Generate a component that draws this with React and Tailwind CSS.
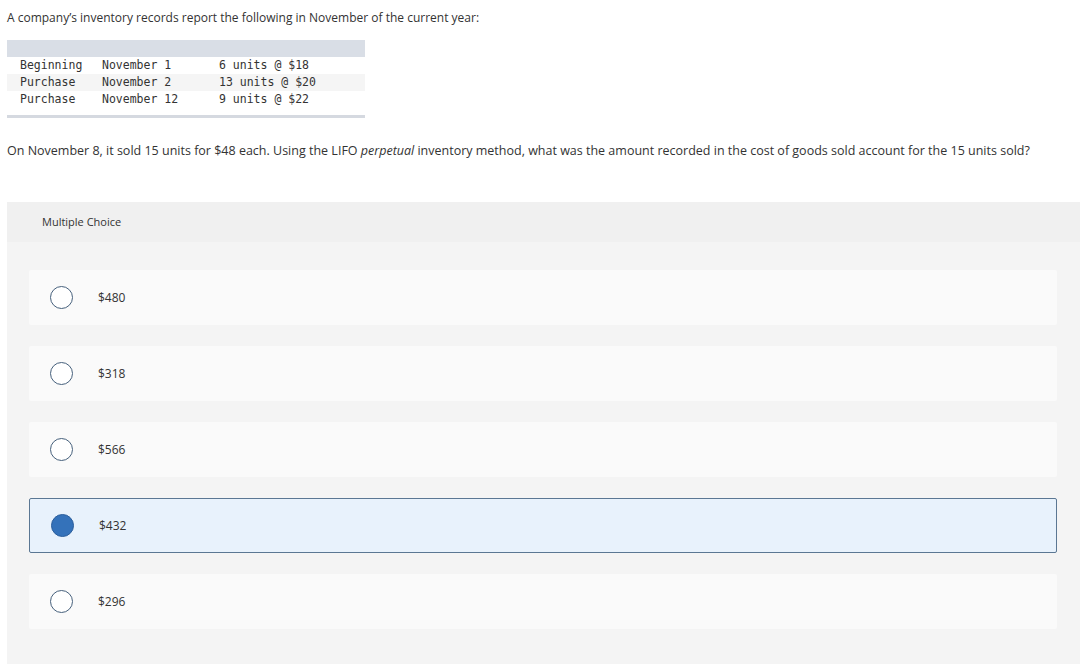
const ROWS = [
  ['Beginning', 'November 1', '6 units @ $18'],
  ['Purchase', 'November 2', '13 units @ $20'],
  ['Purchase', 'November 12', '9 units @ $22'],
];

const CHOICES = ['$480', '$318', '$566', '$432', '$296'];
const SELECTED = 3;

export default function App() {
  return (
    <div className="min-h-[664px] bg-white pl-[7px] pt-[10px] text-[#333]" style={{ fontFamily: '"Open Sans", Arial, sans-serif' }}>
      {/* Prompt */}
      <p className="text-[12px] leading-[16px]">A company’s inventory records report the following in November of the current year:</p>

      {/* Inventory table */}
      <div className="mt-[14px] w-[358px]">
        <div className="h-[17px] bg-[#d9dee6]" />
        <div className="font-['DejaVu_Sans_Mono',monospace] text-[11.5px] text-[#333]">
          {ROWS.map((r, i) => (
            <div key={i} className={`flex h-[17px] items-center pt-[1px] ${i === 1 ? 'bg-[#f5f5f5]' : ''}`}>
              <span className="w-[95px] pl-[13px]">{r[0]}</span>
              <span className="w-[117px]">{r[1]}</span>
              <span>{r[2]}</span>
            </div>
          ))}
        </div>
        <div className="mt-[7px] h-[3px] bg-[#d5d9e0]" />
      </div>

      {/* Question */}
      <p className="mt-[25px] text-[12.5px] leading-[16px]">
        On November 8, it sold 15 units for $48 each. Using the LIFO <em>perpetual</em> inventory method, what was the amount recorded in the cost of goods sold account for the 15 units sold?
      </p>

      {/* Multiple choice panel */}
      <div className="mt-[43px] bg-[#f4f4f4] pb-[35px]">
        <div className="flex h-[40px] items-center bg-[#f0f0f0] pl-[35px] text-[11px]">Multiple Choice</div>
        <div className="mt-[28px] flex flex-col gap-[21px] pl-[22px] pr-[23px]">
          {CHOICES.map((c, i) => {
            const sel = i === SELECTED;
            return (
              <div
                key={c}
                className={`flex h-[55px] items-center rounded-[2px] pl-[21px] ${sel ? 'border border-[#5b7793] bg-[#e8f2fc] pl-[20px]' : 'bg-[#fafafa]'}`}
              >
                {sel ? (
                  <span className="h-[23px] w-[23px] rounded-full border border-[#2c5f9c] bg-[#3472ba]" />
                ) : (
                  <span className="h-[23px] w-[23px] rounded-full border-[1.5px] border-[#46607c] bg-white" />
                )}
                <span className="ml-[25px] text-[12px]">{c}</span>
              </div>
            );
          })}
        </div>
      </div>
    </div>
  );
}
